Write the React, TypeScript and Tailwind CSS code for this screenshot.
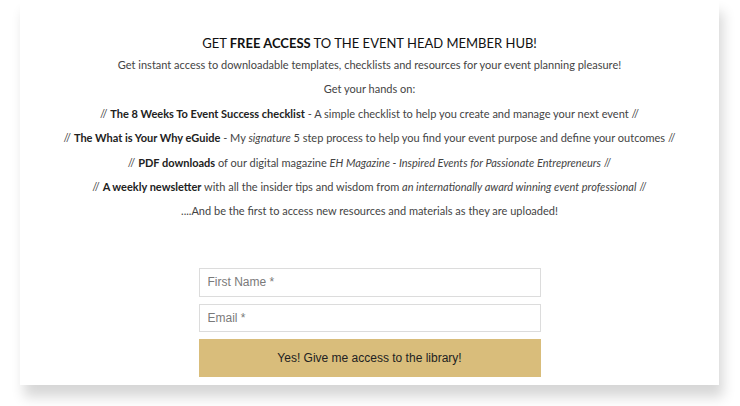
export default function App() {
  return (
    <div className="w-[740px] h-[406px] bg-white overflow-hidden">
      <div className="ml-[20px] w-[699px] h-[385px] bg-white shadow-[4px_12px_12px_rgba(0,0,0,0.16)] pt-[33px] font-['Lato',sans-serif] text-[#444] text-center">
        <h1 className="h-[20px] leading-[20px] text-[13px] text-[#111]">
          GET <b className="font-bold">FREE ACCESS</b> TO THE EVENT HEAD MEMBER HUB!
        </h1>
        <div className="text-[11px] [&>p]:h-[24.4px] [&>p]:leading-[24.4px] [&_b]:font-bold [&_b]:text-[#222]">
          <p>Get instant access to downloadable templates, checklists and resources for your event planning pleasure!</p>
          <p>Get your hands on:</p>
          <p>
            // <b>The 8 Weeks To Event Success checklist</b> - A simple checklist to help you create and manage your next event //
          </p>
          <p>
            // <b>The What is Your Why eGuide</b> - My <i>signature</i> 5 step process to help you find your event purpose and define your outcomes //
          </p>
          <p>
            // <b>PDF downloads</b> of our digital magazine <i>EH Magazine - Inspired Events for Passionate Entrepreneurs</i> //
          </p>
          <p>
            // <b>A weekly newsletter</b> with all the insider tips and wisdom from <i>an internationally award winning event professional</i> //
          </p>
          <p>....And be the first to access new resources and materials as they are uploaded!</p>
        </div>
        <form className="mt-[44px] mx-auto w-[342px] flex flex-col gap-[7px] font-['Liberation_Sans',sans-serif]">
          <input
            type="text"
            placeholder="First Name *"
            className="h-[29px] px-[8px] border border-[#dcdcdc] text-[12px] text-[#333] placeholder:text-[#7a7a7a] outline-none"
          />
          <input
            type="email"
            placeholder="Email *"
            className="h-[28px] px-[8px] border border-[#dcdcdc] text-[12px] text-[#333] placeholder:text-[#7a7a7a] outline-none"
          />
          <button type="button" className="h-[38px] bg-[#d9bd7b] text-[12px] text-[#222]">
            Yes! Give me access to the library!
          </button>
        </form>
      </div>
    </div>
  );
}
